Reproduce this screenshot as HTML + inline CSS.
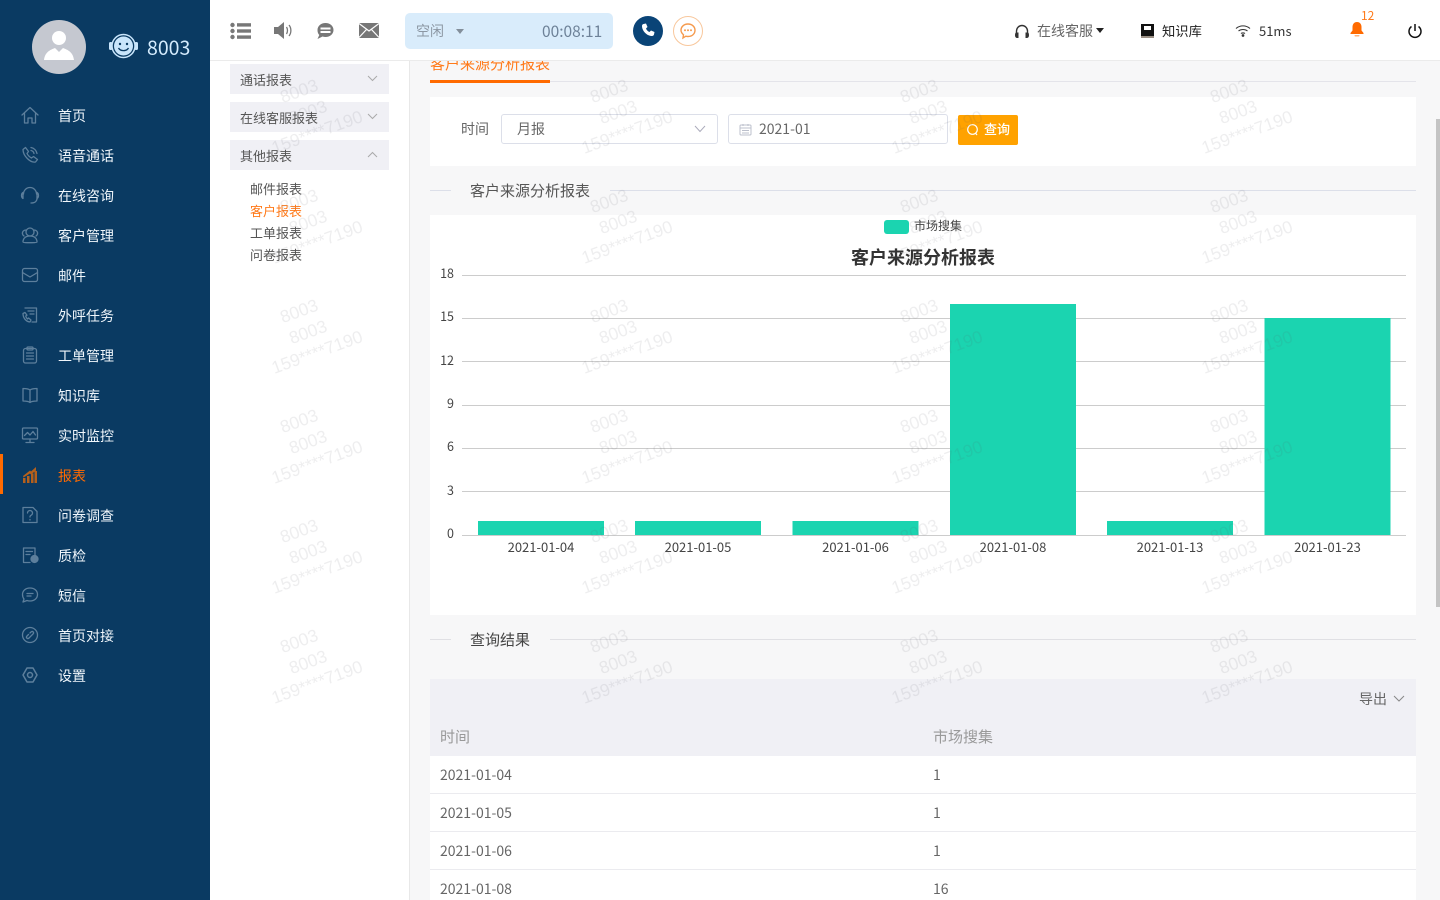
<!DOCTYPE html>
<html lang="zh"><head><meta charset="utf-8"><title>客户报表</title>
<style>
*{box-sizing:border-box}
html,body{margin:0;padding:0;width:1440px;height:900px;overflow:hidden;background:#f7f7f8;font-family:"Noto Sans CJK SC","Liberation Sans",sans-serif;font-size:13px;color:#555}
#page{position:relative;width:1440px;height:900px;overflow:hidden;background:#f7f7f8}
.a{position:absolute;white-space:nowrap}
.t{position:absolute;white-space:nowrap;line-height:20px;height:20px}
#side{position:absolute;left:0;top:0;width:210px;height:900px;background:#0a3a62}
#side .t{left:58px;color:#f0f6fb;font-size:14px;margin-top:1px}
#side svg.i{position:absolute;left:20px;width:20px;height:20px;fill:none;stroke:#5d7f9c;stroke-width:1.3;stroke-linecap:round;stroke-linejoin:round}
#head{position:absolute;left:210px;top:0;width:1230px;height:61px;background:#fff;border-bottom:1px solid #ebebeb;z-index:3}
#left{position:absolute;left:210px;top:61px;width:200px;height:839px;background:#fff;border-right:1px solid #e8e8e8}
.acc{position:absolute;left:20px;width:159px;height:30px;background:#f0f0f5;color:#555;line-height:31px;padding-left:10px;font-size:13px}
.acc svg{position:absolute;right:11px;top:11px}
.sub{position:absolute;left:40px;line-height:22px;height:22px;font-size:13px;color:#555}
.card{position:absolute;left:430px;width:986px;background:#fff}
.ln{position:absolute;height:1px;background:#dcdfe9}
.row{position:absolute;left:430px;width:986px;height:38px;background:#fff;border-bottom:1px solid #ebebef;font-size:14px;color:#666;line-height:38px}
.row span{position:absolute;top:0}
#wm{position:absolute;left:210px;top:61px;width:1230px;height:839px;overflow:hidden;pointer-events:none;z-index:2}
.tile{position:absolute;width:200px;height:100px}
.w{position:absolute;color:rgba(90,90,100,.10);font-size:17.500px;font-family:"Liberation Sans",sans-serif;transform:rotate(-20deg);white-space:nowrap;line-height:20px;text-align:center;transform-origin:center}
.w1{left:69px;top:20px;width:40px}
.w2{left:78px;top:41px;width:40px}
.w3{left:57px;top:61px;width:100px}
</style></head><body>
<div id="page">

<div id="side">
 <svg class="a" style="left:32px;top:20px" width="54" height="54" viewBox="0 0 54 54"><circle cx="27" cy="27" r="27" fill="#c5c8d0"/><circle cx="27" cy="18" r="7" fill="#fff"/><path d="M12 40c1-8 6-10 11-12l4 4 4-4c5 2 10 4 11 12z" fill="#fff"/></svg>
 <svg class="a" style="left:108px;top:33px" width="32" height="28" viewBox="0 0 32 28"><circle cx="15.500" cy="13" r="9.500" fill="#c9e5fb"/><circle cx="15.500" cy="13" r="11.500" fill="none" stroke="#c9e5fb" stroke-width="1.500"/><rect x="1" y="9" width="3.500" height="8" rx="1.500" fill="#c9e5fb"/><rect x="26.500" y="9" width="3.500" height="8" rx="1.500" fill="#c9e5fb"/><circle cx="12" cy="11" r="1.200" fill="#0a3a62"/><circle cx="19" cy="11" r="1.200" fill="#0a3a62"/><path d="M10.500 15c2 3.500 8 3.500 10 0" fill="none" stroke="#0a3a62" stroke-width="1.300"/></svg>
 <div class="a" style="left:147px;top:34px;font-size:19.500px;line-height:26px;color:#d4ebfd">8003</div>

 <svg class="i" style="top:105px" viewBox="0 0 20 20"><path d="M2 10 10 2.500 18 10M4.500 8.500V18H8v-5h4v5h3.500V8.500"/></svg><div class="t" style="top:105px">首页</div>
 <svg class="i" style="top:145px" viewBox="0 0 20 20"><path d="M3 4.500 5.500 2.500 8.500 6.500 7 8.500c1 2 2.500 3.500 4.500 4.500l2-1.500 4 3-2 2.500C10 18 3 10.500 3 4.500zM11 2.500c3 .5 5.500 3 6 6M11 5.500c1.500.3 2.700 1.500 3 3"/></svg><div class="t" style="top:145px">语音通话</div>
 <svg class="i" style="top:185px" viewBox="0 0 20 20"><path d="M3.500 8.500V9a6.500 6.500 0 0 1 13 0M17 7.500c1 .5 1.500 1.500 1.500 3s-.5 2.500-1.500 3v-6zM3 7.500c-1 .5-1.500 1.500-1.500 3s.5 2.500 1.500 3v-6zM17 13.500c0 2.500-2 4.500-6 4.500"/></svg><div class="t" style="top:185px">在线咨询</div>
 <svg class="i" style="top:225px" viewBox="0 0 20 20"><circle cx="10" cy="7" r="4"/><path d="M3 17c0-4 3-6 7-6s7 2 7 6c0 1-14 1-14 0zM6 5C3.500 5 2 7 2.500 9c.2 1 .8 1.500 1.500 2M14 5c2.500 0 4 2 3.500 4-.2 1-.8 1.500-1.500 2"/></svg><div class="t" style="top:225px">客户管理</div>
 <svg class="i" style="top:265px" viewBox="0 0 20 20"><rect x="2.500" y="3.500" width="15" height="13" rx="2"/><path d="M2.500 7.500 10 12l7.500-4.500"/></svg><div class="t" style="top:265px">邮件</div>
 <svg class="i" style="top:305px" viewBox="0 0 20 20"><path d="M5 3h11.500v14H12M8 6h6M10 9h4M5 7.500 3 8.500c0 4 2.500 8 7 8.500l1-2-2.500-2-1 1c-1-.8-1.500-1.800-1.800-3l1.300-.8z"/></svg><div class="t" style="top:305px">外呼任务</div>
 <svg class="i" style="top:345px" viewBox="0 0 20 20"><rect x="3.500" y="3.500" width="13" height="14.500" rx="2"/><rect x="7" y="2" width="6" height="3" rx="1"/><path d="M6.500 8h7M6.500 11h7M6.500 14h7"/></svg><div class="t" style="top:345px">工单管理</div>
 <svg class="i" style="top:385px" viewBox="0 0 20 20"><path d="M10 5C8 3.500 5 3.500 3 3.500V16c2 0 5 0 7 1.500 2-1.500 5-1.500 7-1.500V3.500C15 3.500 12 3.500 10 5zM10 5v12.500"/></svg><div class="t" style="top:385px">知识库</div>
 <svg class="i" style="top:425px" viewBox="0 0 20 20"><rect x="2.500" y="3" width="15" height="11" rx="1"/><path d="M4.500 10.500 7.500 7.500 10 10l3-3.500 2.500 3.500M10 14v3.500M6 17.500h8"/></svg><div class="t" style="top:425px">实时监控</div>
 <svg class="a" style="left:23px;top:467px" width="14" height="16" viewBox="0 0 14 16" fill="#b5601c"><rect x="0" y="11" width="2.500" height="5"/><rect x="4" y="9" width="2.500" height="7"/><rect x="8" y="6.500" width="2.500" height="9.500"/><rect x="11.500" y="4" width="2.500" height="12"/><path d="M0 9 7 3.500l1 1L13 0v3.500L8 7.500 7 6.500 0.500 10.500z"/></svg><div class="t" style="top:465px;color:#ff6a00">报表</div>
 <div class="a" style="left:0;top:454px;width:3px;height:40px;background:#ff6a00"></div>
 <svg class="i" style="top:505px" viewBox="0 0 20 20"><path d="M3 2.500h10l4 4V17.500H3zM7.500 8a2.500 2.500 0 1 1 3.500 2.300c-.7.300-1 .8-1 1.700M10 14.500v.5"/></svg><div class="t" style="top:505px">问卷调查</div>
 <svg class="i" style="top:545px" viewBox="0 0 20 20"><path d="M10 17.500H3.500V3H15v7M6 6.500h6.500M6 9.500h4"/><circle cx="14.500" cy="14" r="3.500" fill="#5d7f9c"/></svg><div class="t" style="top:545px">质检</div>
 <svg class="i" style="top:585px" viewBox="0 0 20 20"><path d="M10 3c4.500 0 7.500 2.800 7.500 6.500S14.500 16 10 16c-1 0-2-.1-3-.5L3 17l1-3C3 12.800 2.500 11.200 2.500 9.500 2.500 5.800 5.500 3 10 3zM7 8.500h6M7 11h4"/></svg><div class="t" style="top:585px">短信</div>
 <svg class="i" style="top:625px" viewBox="0 0 20 20"><circle cx="10" cy="10" r="7.500"/><path d="M8.500 9.500 7 11c-1.500 1.500.5 3.500 2 2l4-4c1.500-1.500-.5-3.500-2-2l-1 1"/></svg><div class="t" style="top:625px">首页对接</div>
 <svg class="i" style="top:665px" viewBox="0 0 20 20"><path d="M7 3h6l4 7-4 7H7l-4-7z" stroke-width="1.500"/><circle cx="10" cy="10" r="2.500" stroke-width="1.500"/></svg><div class="t" style="top:665px">设置</div>
</div>

<div id="head">
 <svg class="a" style="left:20px;top:22px" width="21" height="18" viewBox="0 0 21 18" fill="#777"><circle cx="2.500" cy="3" r="2.200"/><circle cx="2.500" cy="9" r="2.200"/><circle cx="2.500" cy="15" r="2.200"/><rect x="7" y="1.200" width="14" height="3.400"/><rect x="7" y="7.300" width="14" height="3.400"/><rect x="7" y="13.400" width="14" height="3.400"/></svg>
 <svg class="a" style="left:64px;top:21px" width="20" height="19" viewBox="0 0 20 19"><path d="M0 6h4l6-5v17l-6-5H0z" fill="#777"/><path d="M12.500 6c1.300 2 1.300 5 0 7M15 4c2.500 3 2.500 8 0 11" fill="none" stroke="#777" stroke-width="1.300"/></svg>
 <svg class="a" style="left:107px;top:22px" width="17" height="18" viewBox="0 0 17 18"><path d="M8.500 1C13 1 16.500 4 16.500 8S13 15 8.500 15c-1 0-2-.2-3-.5L0.500 17l1.800-4C1 11.800.5 10 .5 8 .5 4 4 1 8.500 1z" fill="#777"/><rect x="3.500" y="5.500" width="10" height="2" fill="#fff"/><rect x="3.500" y="9" width="10" height="2" fill="#fff"/></svg>
 <svg class="a" style="left:149px;top:23px" width="20" height="15" viewBox="0 0 20 15"><rect width="20" height="15" fill="#777"/><path d="M0 .5 10 8 20 .5M0 14.500 7.500 6.500M20 14.500 12.500 6.500" fill="none" stroke="#fff" stroke-width="1.200"/></svg>

 <div class="a" style="left:195px;top:13px;width:208px;height:36px;background:#d9ecfb;border-radius:5px"></div>
 <div class="t" style="left:206px;top:21px;font-size:14px;color:#8c97a3">空闲</div>
 <div class="a" style="left:246px;top:29px;width:0;height:0;border-left:4.500px solid transparent;border-right:4.500px solid transparent;border-top:5px solid #838f9b"></div>
 <div class="t" style="left:332px;top:21px;font-size:15.500px;color:#6e8298">00:08:11</div>

 <svg class="a" style="left:423px;top:16px" width="30" height="30" viewBox="0 0 30 30"><circle cx="15" cy="15" r="15" fill="#0a4477"/><path d="M10.500 8 13 7.500l1.500 3.500-1.500 1.500c.5 1.500 2 3 3.500 3.500l1.500-1.500 3.500 1.500-.5 2.500c-.3 1-1 1.500-2 1.500-5 0-10-5-10-10 0-1 .500-1.700 1.500-2z" fill="#fff"/></svg>
 <svg class="a" style="left:463px;top:16px" width="30" height="30" viewBox="0 0 30 30"><circle cx="15" cy="15" r="14.500" fill="#fff" stroke="#f8c79c"/><path d="M15 8c4 0 7 2.700 7 6.300S19 20.500 15 20.500c-.7 0-1.500-.1-2.200-.3L10 22l.5-3.200C9 17.500 8 16 8 14.300 8 10.700 11 8 15 8z" fill="none" stroke="#f59a4d" stroke-width="1.400"/><circle cx="12" cy="14.300" r="1" fill="#f59a4d"/><circle cx="15" cy="14.300" r="1" fill="#f59a4d"/><circle cx="18" cy="14.300" r="1" fill="#f59a4d"/></svg>

 <svg class="a" style="left:804px;top:24px" width="16" height="15" viewBox="0 0 16 15"><path d="M2.500 9V7a5.500 5.500 0 0 1 11 0v2" fill="none" stroke="#333" stroke-width="1.400"/><path d="M2 8.500h2.500V14H3c-1.200 0-2-1-2-2.700S1.500 8.500 2 8.500zM14 8.500h-2.500V14H13c1.200 0 2-1 2-2.700s-.5-2.800-1-2.800z" fill="#333"/></svg>
 <div class="t" style="left:827px;top:21px;font-size:14px;color:#666">在线客服</div>
 <div class="a" style="left:886px;top:28px;width:0;height:0;border-left:4px solid transparent;border-right:4px solid transparent;border-top:5px solid #222"></div>
 <svg class="a" style="left:931px;top:24px" width="13" height="14" viewBox="0 0 13 14"><rect x="0" y="0" width="13" height="12" fill="#111"/><rect x="3" y="2" width="7" height="4" fill="#fff"/><rect x="0" y="12" width="13" height="2" fill="#9a8f84"/></svg>
 <div class="t" style="left:952px;top:21px;font-size:13.300px;color:#222">知识库</div>
 <svg class="a" style="left:1025px;top:24px" width="16" height="13" viewBox="0 0 16 13" fill="none" stroke="#333" stroke-width="1.100"><path d="M1 4.500c4-3.500 10-3.500 14 0M3.500 7c2.500-2 6.500-2 9 0M6 9.500c1-.8 3-.8 4 0"/><circle cx="8" cy="11.500" r=".8" fill="#333"/></svg>
 <div class="t" style="left:1049px;top:21px;font-size:13px;color:#333">51ms</div>
 <div class="a" style="left:1151px;top:8px;font-size:12px;line-height:16px;color:#ff7a1a">12</div>
 <svg class="a" style="left:1139px;top:21px" width="16" height="16" viewBox="0 0 16 16" fill="#ff6a00"><path d="M8 1c3 0 4.500 2.300 4.500 5v3.500L14.500 12v1h-13v-1l2-2.500V6C3.500 3.300 5 1 8 1z"/><rect x="5.500" y="14" width="5" height="1.500" rx=".7" fill="#ffb27a"/></svg>
 <svg class="a" style="left:1197px;top:23px" width="16" height="16" viewBox="0 0 16 16" fill="none" stroke="#111" stroke-width="1.500"><path d="M8 1v7M4.500 3.500a6 6 0 1 0 7 0"/></svg>
</div>

<div id="left">
 <div class="acc" style="top:3px">通话报表<svg width="11" height="7" viewBox="0 0 11 7" fill="none" stroke="#aaa"><path d="M1 1l4.500 4.500L10 1"/></svg></div>
 <div class="acc" style="top:41px">在线客服报表<svg width="11" height="7" viewBox="0 0 11 7" fill="none" stroke="#aaa"><path d="M1 1l4.500 4.500L10 1"/></svg></div>
 <div class="acc" style="top:79px">其他报表<svg width="11" height="7" viewBox="0 0 11 7" fill="none" stroke="#aaa"><path d="M1 6l4.500-4.500L10 6"/></svg></div>
 <div class="sub" style="top:117px">邮件报表</div>
 <div class="sub" style="top:139px;color:#ff7a1a">客户报表</div>
 <div class="sub" style="top:161px">工单报表</div>
 <div class="sub" style="top:183px">问卷报表</div>
</div>

<!-- tab -->
<div class="a" style="left:430px;top:81px;width:986px;height:1px;background:#e4e4ea"></div>
<div class="a" style="left:430px;top:80px;width:120px;height:3px;background:#ff6a00"></div>
<div class="a" style="left:430px;top:53px;font-size:15px;line-height:22px;color:#ff7a1a;z-index:1">客户来源分析报表</div>

<!-- filter -->
<div class="card" style="top:97px;height:69px"></div>
<div class="t" style="left:461px;top:119px;font-size:14px;color:#666">时间</div>
<div class="a" style="left:501px;top:114px;width:217px;height:30px;background:#fff;border:1px solid #dcdfe9;border-radius:3px"></div>
<div class="t" style="left:517px;top:119px;font-size:14px;color:#666">月报</div>
<svg class="a" style="left:694px;top:125px" width="12" height="8" viewBox="0 0 12 8" fill="none" stroke="#aab"><path d="M1 1l5 5.500L11 1"/></svg>
<div class="a" style="left:728px;top:114px;width:220px;height:30px;background:#fff;border:1px solid #dcdfe9;border-radius:3px"></div>
<svg class="a" style="left:739px;top:123px" width="13" height="13" viewBox="0 0 13 13" fill="none" stroke="#bcc0cc"><rect x="1" y="2" width="11" height="10" rx="1"/><path d="M1 5h11M4 1v2M9 1v2M3 7.500h7M3 10h7"/></svg>
<div class="t" style="left:759px;top:119px;font-size:14px;color:#666">2021-01</div>
<div class="a" style="left:958px;top:115px;width:60px;height:30px;background:#ffa200;border-radius:2px"></div>
<svg class="a" style="left:966px;top:123px" width="13" height="14" viewBox="0 0 13 14" fill="none" stroke="#fff" stroke-width="1.200"><circle cx="6.500" cy="6.500" r="4.800"/><path d="M9.500 10l1.500 2"/></svg>
<div class="t" style="left:984px;top:119px;font-size:13px;color:#fff;font-weight:500">查询</div>

<!-- section 1 -->
<div class="ln" style="left:430px;top:190px;width:21px"></div>
<div class="ln" style="left:610px;top:190px;width:806px"></div>
<div class="t" style="left:470px;top:181px;font-size:15px;color:#555">客户来源分析报表</div>

<!-- chart -->
<div class="card" style="top:215px;height:400px"></div>
<svg class="a" style="left:430px;top:215px" width="986" height="400" viewBox="430 215 986 400">
 <g stroke="#ccc" stroke-width="1">
  <path d="M462 275.500H1406M462 318.500H1406M462 361.500H1406M462 405.500H1406M462 448.500H1406M462 491.500H1406M462 535.500H1406"/>
 </g>
 <g fill="#1bd4b0">
  <rect x="478" y="521" width="126" height="14"/>
  <rect x="635" y="521" width="126" height="14"/>
  <rect x="792.500" y="521" width="126" height="14"/>
  <rect x="950" y="304" width="126" height="231"/>
  <rect x="1107" y="521" width="126" height="14"/>
  <rect x="1264.500" y="318" width="126" height="217"/>
  <rect x="884" y="220" width="25" height="14" rx="3"/>
 </g>
 <g font-family="Noto Sans CJK SC,Liberation Sans,sans-serif" font-size="12.500" fill="#444" text-anchor="end">
  <text x="454" y="278">18</text><text x="454" y="321">15</text><text x="454" y="365">12</text><text x="454" y="408">9</text><text x="454" y="451">6</text><text x="454" y="495">3</text><text x="454" y="538">0</text>
 </g>
 <g font-family="Noto Sans CJK SC,Liberation Sans,sans-serif" font-size="13" fill="#444" text-anchor="middle">
  <text x="541" y="552">2021-01-04</text><text x="698" y="552">2021-01-05</text><text x="855.500" y="552">2021-01-06</text><text x="1013" y="552">2021-01-08</text><text x="1170" y="552">2021-01-13</text><text x="1327.500" y="552">2021-01-23</text>
 </g>
 <text x="914" y="230" font-family="Noto Sans CJK SC,sans-serif" font-size="12" fill="#444">市场搜集</text>
 <text x="923" y="264" font-family="Noto Sans CJK SC,sans-serif" font-size="18" font-weight="700" fill="#333" text-anchor="middle">客户来源分析报表</text>
</svg>

<!-- section 2 -->
<div class="ln" style="left:430px;top:639px;width:21px;background:#e0e0e4"></div>
<div class="ln" style="left:550px;top:639px;width:866px;background:#e0e0e4"></div>
<div class="t" style="left:470px;top:630px;font-size:15px;color:#444">查询结果</div>

<!-- table -->
<div class="a" style="left:430px;top:679px;width:986px;height:77px;background:#f0f0f5"></div>
<div class="t" style="left:1359px;top:689px;font-size:14px;color:#666">导出</div>
<svg class="a" style="left:1393px;top:695px" width="12" height="8" viewBox="0 0 12 8" fill="none" stroke="#888"><path d="M1 1l5 5L11 1"/></svg>
<div class="t" style="left:440px;top:727px;font-size:15px;color:#999">时间</div>
<div class="t" style="left:933px;top:727px;font-size:15px;color:#999">市场搜集</div>
<div class="row" style="top:756px"><span style="left:10px">2021-01-04</span><span style="left:503px">1</span></div>
<div class="row" style="top:794px"><span style="left:10px">2021-01-05</span><span style="left:503px">1</span></div>
<div class="row" style="top:832px"><span style="left:10px">2021-01-06</span><span style="left:503px">1</span></div>
<div class="row" style="top:870px;height:30px;border-bottom:0"><span style="left:10px">2021-01-08</span><span style="left:503px">16</span></div>

<!-- scrollbar -->
<div class="a" style="left:1436px;top:119px;width:4px;height:488px;background:#c4c4c4"></div>

<!-- watermark -->
<div id="wm">
<div class="tile" style="left:0;top:0"><div class="w w1">8003</div><div class="w w2">8003</div><div class="w w3">159****7190</div></div>
<div class="tile" style="left:310px;top:0"><div class="w w1">8003</div><div class="w w2">8003</div><div class="w w3">159****7190</div></div>
<div class="tile" style="left:620px;top:0"><div class="w w1">8003</div><div class="w w2">8003</div><div class="w w3">159****7190</div></div>
<div class="tile" style="left:930px;top:0"><div class="w w1">8003</div><div class="w w2">8003</div><div class="w w3">159****7190</div></div>
<div class="tile" style="left:0;top:110px"><div class="w w1">8003</div><div class="w w2">8003</div><div class="w w3">159****7190</div></div>
<div class="tile" style="left:310px;top:110px"><div class="w w1">8003</div><div class="w w2">8003</div><div class="w w3">159****7190</div></div>
<div class="tile" style="left:620px;top:110px"><div class="w w1">8003</div><div class="w w2">8003</div><div class="w w3">159****7190</div></div>
<div class="tile" style="left:930px;top:110px"><div class="w w1">8003</div><div class="w w2">8003</div><div class="w w3">159****7190</div></div>
<div class="tile" style="left:0;top:220px"><div class="w w1">8003</div><div class="w w2">8003</div><div class="w w3">159****7190</div></div>
<div class="tile" style="left:310px;top:220px"><div class="w w1">8003</div><div class="w w2">8003</div><div class="w w3">159****7190</div></div>
<div class="tile" style="left:620px;top:220px"><div class="w w1">8003</div><div class="w w2">8003</div><div class="w w3">159****7190</div></div>
<div class="tile" style="left:930px;top:220px"><div class="w w1">8003</div><div class="w w2">8003</div><div class="w w3">159****7190</div></div>
<div class="tile" style="left:0;top:330px"><div class="w w1">8003</div><div class="w w2">8003</div><div class="w w3">159****7190</div></div>
<div class="tile" style="left:310px;top:330px"><div class="w w1">8003</div><div class="w w2">8003</div><div class="w w3">159****7190</div></div>
<div class="tile" style="left:620px;top:330px"><div class="w w1">8003</div><div class="w w2">8003</div><div class="w w3">159****7190</div></div>
<div class="tile" style="left:930px;top:330px"><div class="w w1">8003</div><div class="w w2">8003</div><div class="w w3">159****7190</div></div>
<div class="tile" style="left:0;top:440px"><div class="w w1">8003</div><div class="w w2">8003</div><div class="w w3">159****7190</div></div>
<div class="tile" style="left:310px;top:440px"><div class="w w1">8003</div><div class="w w2">8003</div><div class="w w3">159****7190</div></div>
<div class="tile" style="left:620px;top:440px"><div class="w w1">8003</div><div class="w w2">8003</div><div class="w w3">159****7190</div></div>
<div class="tile" style="left:930px;top:440px"><div class="w w1">8003</div><div class="w w2">8003</div><div class="w w3">159****7190</div></div>
<div class="tile" style="left:0;top:550px"><div class="w w1">8003</div><div class="w w2">8003</div><div class="w w3">159****7190</div></div>
<div class="tile" style="left:310px;top:550px"><div class="w w1">8003</div><div class="w w2">8003</div><div class="w w3">159****7190</div></div>
<div class="tile" style="left:620px;top:550px"><div class="w w1">8003</div><div class="w w2">8003</div><div class="w w3">159****7190</div></div>
<div class="tile" style="left:930px;top:550px"><div class="w w1">8003</div><div class="w w2">8003</div><div class="w w3">159****7190</div></div>
</div>
</div>
</body></html>
